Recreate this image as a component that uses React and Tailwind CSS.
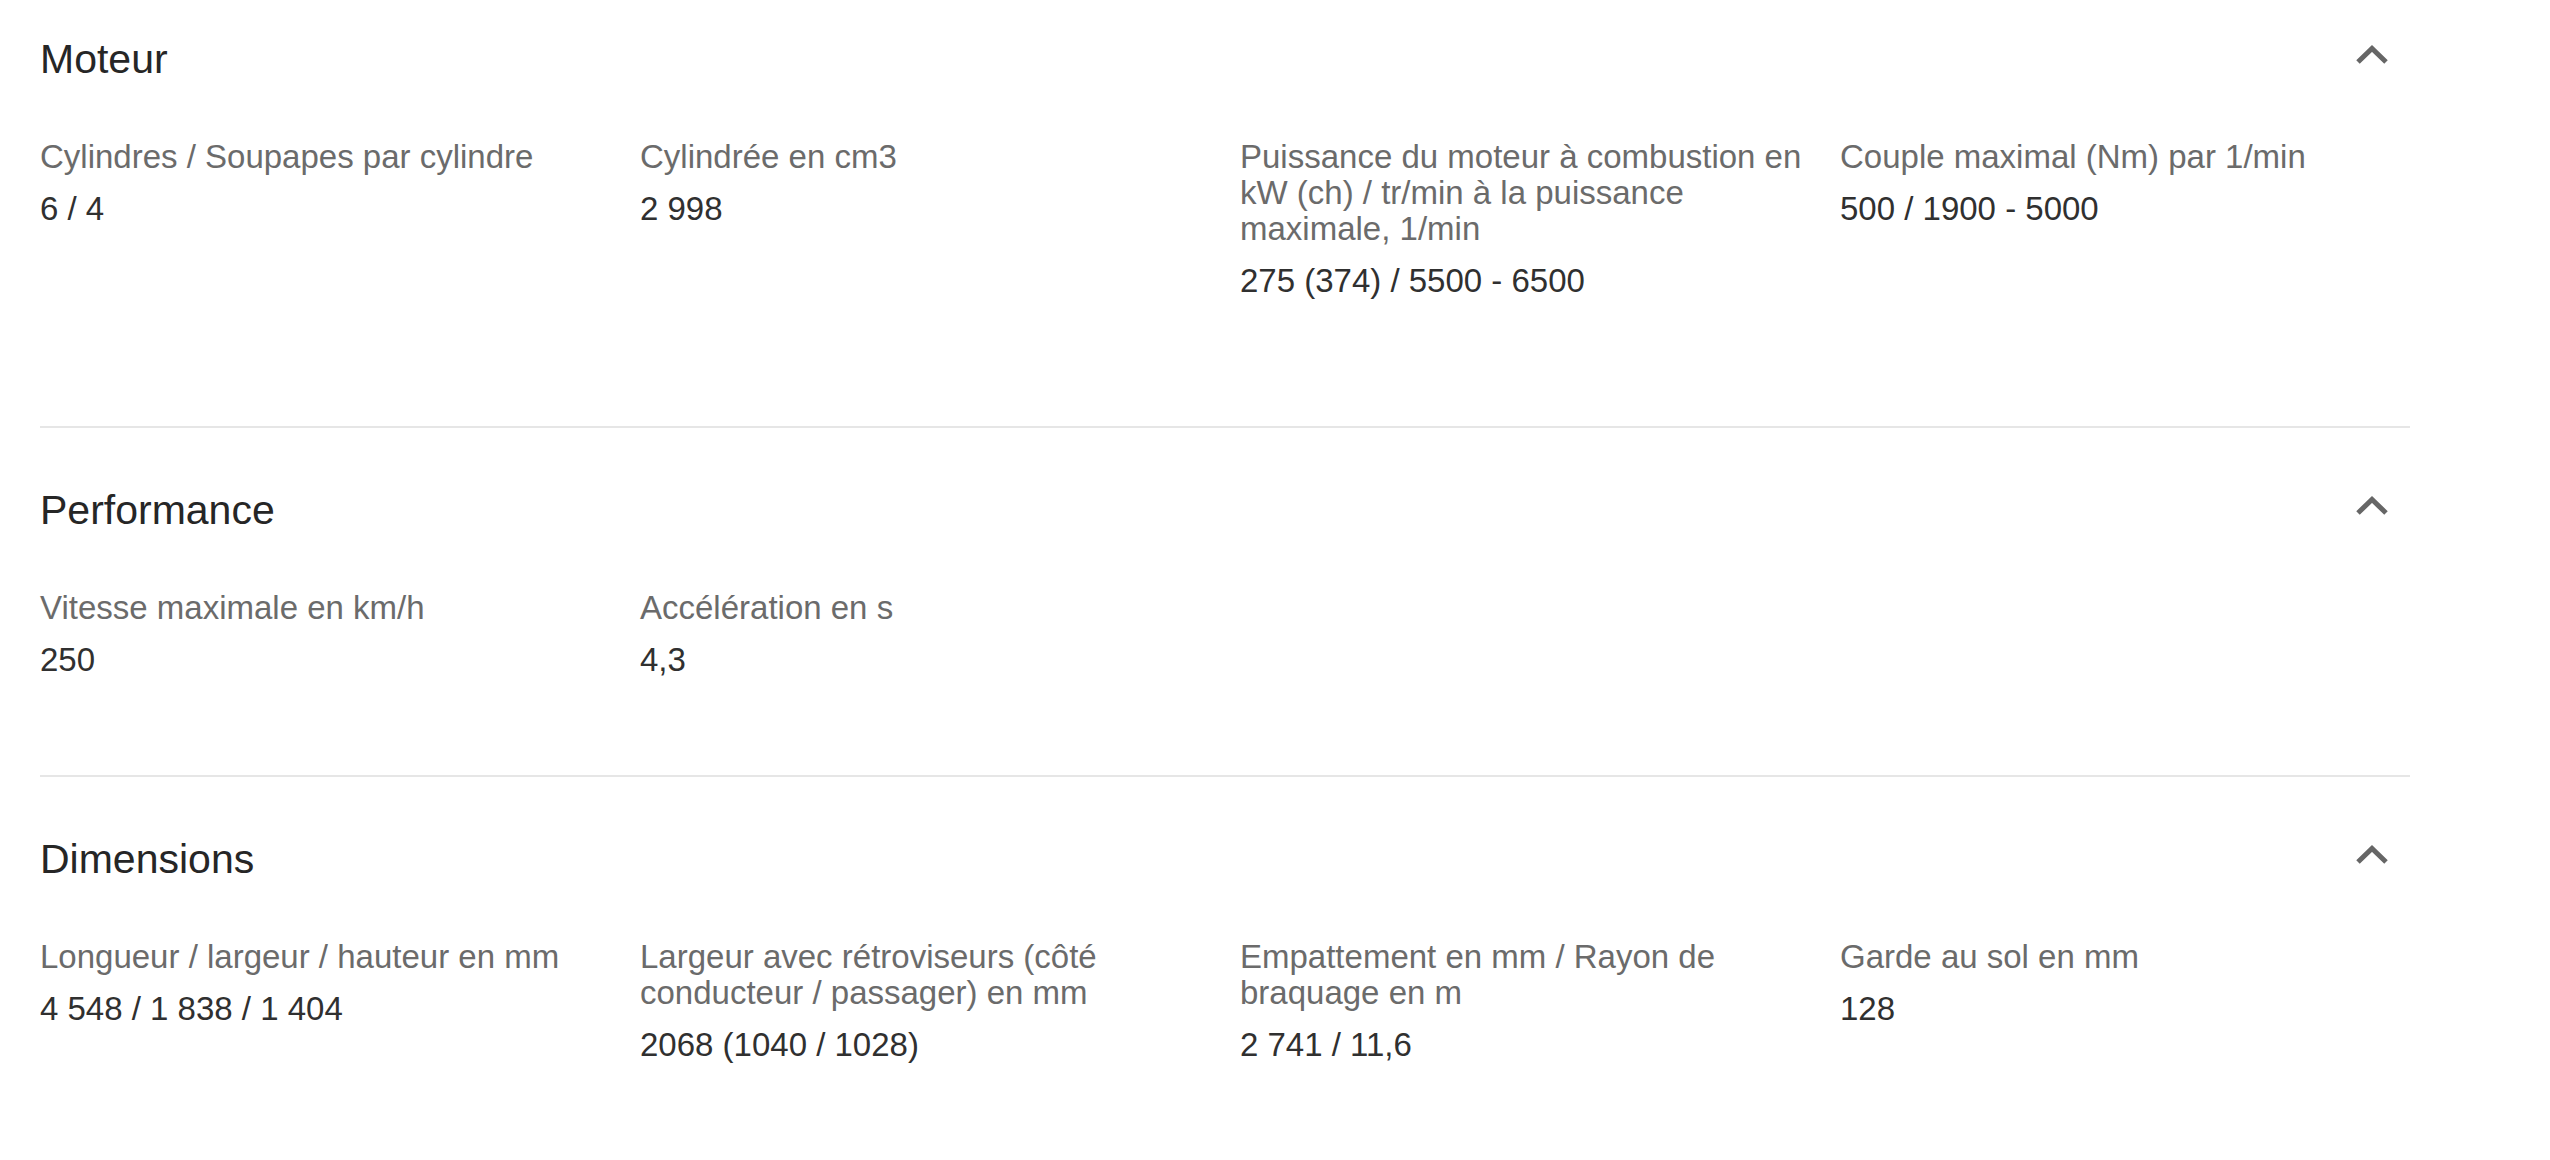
import React from "react";

/* ---------- DATA ---------- */

const SECTIONS = [
  {
    title: "Moteur",
    pad: "pb-[127px] border-b-2 border-[#e6e6e6]",
    items: [
      { label: "Cylindres / Soupapes par cylindre", value: "6 / 4" },
      { label: "Cylindrée en cm3", value: "2 998" },
      {
        label: "Puissance du moteur à combustion en kW (ch) / tr/min à la puissance maximale, 1/min",
        value: "275 (374) / 5500 - 6500",
      },
      { label: "Couple maximal (Nm) par 1/min", value: "500 / 1900 - 5000" },
    ],
  },
  {
    title: "Performance",
    pad: "pt-[58px] pb-[97px] border-b-2 border-[#e6e6e6]",
    items: [
      { label: "Vitesse maximale en km/h", value: "250" },
      { label: "Accélération en s", value: "4,3" },
    ],
  },
  {
    title: "Dimensions",
    pad: "pt-[58px] pb-[96px]",
    items: [
      { label: "Longueur / largeur / hauteur en mm", value: "4 548 / 1 838 / 1 404" },
      { label: "Largeur avec rétroviseurs (côté conducteur / passager) en mm", value: "2068 (1040 / 1028)" },
      { label: "Empattement en mm / Rayon de braquage en m", value: "2 741 / 11,6" },
      { label: "Garde au sol en mm", value: "128" },
    ],
  },
];

/* ---------- UI HELPERS ---------- */

const Chevron = () => (
  <svg width="34" height="20" viewBox="0 0 34 20" className="mt-[10px] mr-[21px] shrink-0">
    <polyline
      points="3,17 17,3.5 31,17"
      fill="none"
      stroke="#666666"
      strokeWidth="5"
      strokeLinejoin="miter"
    />
  </svg>
);

const Spec = ({ label, value }) => (
  <div>
    <div className="text-[33px] leading-[36px] text-[#6b6b6b]">{label}</div>
    <div className="mt-4 text-[33px] leading-[36px] text-[#303030]">{value}</div>
  </div>
);

const Section = ({ title, pad, items }) => (
  <section className={pad}>
    <div className="flex items-start justify-between">
      <h2 className="text-[41px] leading-[48px] font-normal text-[#262626]">{title}</h2>
      <Chevron />
    </div>
    <div className="mt-[56px] grid grid-cols-4 gap-x-[30px]">
      {items.map((it) => (
        <Spec key={it.label} {...it} />
      ))}
    </div>
  </section>
);

/* ---------- MAIN COMPONENT ---------- */

export default function App() {
  return (
    <div className="min-h-screen bg-white font-['Liberation_Sans',Arial,sans-serif]">
      <div className="w-[2410px] pl-[40px] pt-[35px]">
        {SECTIONS.map((s) => (
          <Section key={s.title} {...s} />
        ))}
      </div>
    </div>
  );
}
